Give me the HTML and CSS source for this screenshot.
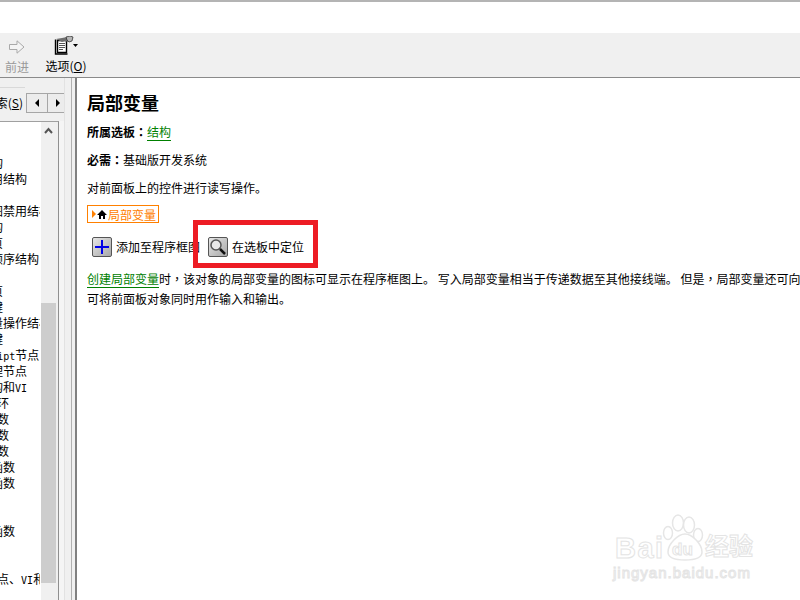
FILE: index.html
```html
<!DOCTYPE html>
<html lang="zh">
<head>
<meta charset="utf-8">
<title>局部变量</title>
<link rel="stylesheet" href="styles.css">
</head>
<body>
<div class="window">
  <div class="titlearea"></div>
  <div class="toolbar">
    <div class="tool tool-forward">
      <svg class="tool-icon" width="18" height="16" viewBox="0 0 18 16"><path d="M1.500 5.500H9V1.800L16 8l-7 6.200v-3.700H1.500z" fill="#f4f4f4" stroke="#a9a9a9"/></svg>
      <span class="tool-label disabled">前进</span>
    </div>
    <div class="tool tool-options">
      <svg class="tool-icon" width="24" height="20" viewBox="0 0 24 20">
        <path d="M3.500 4.500h9v12h-9z" fill="#fff" stroke="#000" stroke-width="1.400"/>
        <path d="M1.500 3.500v14.500h12" fill="none" stroke="#000" stroke-width="1.400"/>
        <path d="M5 7.500h6M5 9.500h6M5 11.500h6M5 13.500h4" stroke="#555"/>
        <path d="M2 3l6-1 5-1 3 2-2 3-3-1-3 1z" fill="#6e6e6e"/>
        <path d="M12 1l4-1 3 1-1 4-3 1-2-2z" fill="#b5b5b5" stroke="#222" stroke-width=".7"/>
        <path d="M19 8h5l-2.500 3z" fill="#000"/>
      </svg>
      <span class="tool-label">选项(<u>O</u>)</span>
    </div>
  </div>
  <div class="main">
    <aside class="side">
      <div class="tabs">
        <div class="tab-line"></div>
        <div class="tab-row">
          <div class="tab-text"><span>搜索(<u>S</u>)</span></div>
          <div class="tab-buttons">
            <button class="nav-btn"><span class="tri-left"></span></button>
            <button class="nav-btn"><span class="tri-right"></span></button>
          </div>
        </div>
      </div>
      <div class="listbox">
        <ul class="list">
          <li>事件结构</li>
          <li>条件禁用结构</li>
          <li></li>
          <li>程序框图禁用结构</li>
          <li>条件结构</li>
          <li>添加分页</li>
          <li>层叠式顺序结构</li>
          <li></li>
          <li>删除分页</li>
          <li>快捷按键</li>
          <li>全局变量操作结构</li>
          <li>删除按键</li>
          <li><span class="lat">MathScript</span>节点</li>
          <li>文本处理节点</li>
          <li>程序结构和<span class="lat">VI</span></li>
          <li><span class="lat">While</span>循环</li>
          <li><span class="lat">DAQ</span>类函数</li>
          <li><span class="lat">XML</span>类函数</li>
          <li><span class="lat">Web</span>类函数</li>
          <li>布尔类函数</li>
          <li>数值类函数</li>
          <li></li>
          <li></li>
          <li>数组类函数</li>
          <li></li>
          <li></li>
          <li><span class="lat">VIs</span>及节点、<span class="lat">VI</span>和函数</li>
        </ul>
        <div class="scrollbar">
          <svg class="scroll-up" width="15" height="17" viewBox="0 0 15 17"><path d="M4 11l3.500-4 3.500 4" fill="none" stroke="#555" stroke-width="2"/></svg>
          <div class="scroll-thumb"></div>
        </div>
      </div>
    </aside>
    <div class="splitter"></div>
    <main class="content">
      <h1>局部变量</h1>
      <p class="line"><b>所属选板<span class="tc" lang="zh-Hant">：</span></b><a>结构</a></p>
      <p class="line"><b>必需<span class="tc" lang="zh-Hant">：</span></b>基础版开发系统</p>
      <p class="line">对前面板上的控件进行读写操作。</p>
      <div class="tag">
        <span class="tag-tri"></span>
        <svg width="10" height="9" viewBox="0 0 10 9"><path d="M5 0L0 5h2v4h2V6h2v3h2V5h2z" fill="#000"/></svg>
        <span>局部变量</span>
      </div>
      <div class="actions">
        <div class="action">
          <span class="icon-btn">
            <svg width="20" height="20" viewBox="0 0 20 20"><path d="M9 3h2v6h6v2h-6v6H9v-6H3V9h6z" fill="#0000e6"/></svg>
          </span>
          <span>添加至程序框图</span>
        </div>
        <div class="action">
          <span class="icon-btn">
            <svg width="20" height="20" viewBox="0 0 20 20">
              <circle cx="8" cy="8" r="5" fill="#e8e8e8" stroke="#555" stroke-width="1.500"/>
              <path d="M12 12l5 5" stroke="#111" stroke-width="2.500"/>
            </svg>
          </span>
          <span>在选板中定位</span>
        </div>
      </div>
      <p class="para"><a>创建局部变量</a>时<span class="tc" lang="zh-Hant">，</span>该对象的局部变量的图标可显示在程序框图上。 写入局部变量相当于传递数据至其他接线端。 但是<span class="tc" lang="zh-Hant">，</span>局部变量还可向<br>可将前面板对象同时用作输入和输出。</p>
    </main>
  </div>
  <div class="highlight"></div>
  <svg class="watermark" width="160" height="75" viewBox="0 0 160 75">
    <g class="wm-shape">
      <ellipse cx="78" cy="13" rx="5.500" ry="8"/>
      <ellipse cx="89" cy="15" rx="5.500" ry="8"/>
      <ellipse cx="68" cy="23" rx="4.500" ry="6.500"/>
      <ellipse cx="98" cy="25" rx="4.500" ry="6.500"/>
      <path d="M85 24c7 0 17 10 17 18 0 6-8 8-17 8s-17-2-17-8c0-8 10-18 17-18z"/>
    </g>
    <text class="wm-big" x="15" y="48">Bai</text>
    <text class="wm-du" x="72" y="45">du</text>
    <text class="wm-cn" x="105" y="45">经验</text>
    <text class="wm-url" x="13" y="68">jingyan.baidu.com</text>
  </svg>
</div>
</body>
</html>
```
FILE: styles.css
```css
* { box-sizing: border-box; }
html, body { margin: 0; padding: 0; }
body { background: #fff; font-family: "Noto Sans CJK SC", "Liberation Sans", sans-serif; font-size: 12px; color: #000; }
.window { position: relative; width: 800px; height: 600px; overflow: hidden; display: flex; flex-direction: column; }
.titlearea { height: 33px; border-top: 2px solid #b4b4b4; background: #fff; flex: none; }
.toolbar { height: 45px; flex: none; background: #f0f0f0; border-bottom: 1px solid #8a8a8a; display: flex; }
.tool { display: flex; flex-direction: column; align-items: center; }
.tool-forward { width: 34px; padding-top: 6px; }
.tool-options { width: 42px; margin-left: 11px; padding-top: 3px; }
.tool-icon { flex: none; }
.tool-label { line-height: 16px; white-space: nowrap; }
.tool-forward .tool-label { margin-top: 4px; }
.tool-options .tool-label { margin-top: 2px; }
.disabled { color: #9a9a9a; }

.main { flex: 1; display: flex; min-height: 0; }
.side { width: 64px; flex: none; background: #f5f5f5; display: flex; flex-direction: column; }
.tabs { height: 43px; flex: none; background: #f0f0f0; padding-top: 9px; }
.tab-line { width: 25px; height: 1px; background: #d9d9d9; }
.tab-row { display: flex; align-items: center; margin-top: 5px; height: 20px; }
.tab-text { width: 26px; flex: none; white-space: nowrap; overflow: hidden; display: flex; justify-content: flex-end; padding-right: 3px; line-height: 20px; }
.tab-text span { flex: none; }
.tab-buttons { display: flex; border: 1px solid #a6a6a6; height: 20px; }
.nav-btn { width: 20px; height: 18px; padding: 0; border: 0; background: #ececec; display: flex; align-items: center; justify-content: center; }
.nav-btn + .nav-btn { border-left: 1px solid #a6a6a6; }
.tri-left, .tri-right { width: 0; height: 0; border-top: 4px solid transparent; border-bottom: 4px solid transparent; }
.tri-left { border-right: 4px solid #000; }
.tri-right { border-left: 4px solid #000; }

.listbox { flex: 1; min-height: 0; margin-right: 5px; border-top: 1px solid #a0a0a0; border-right: 1px solid #8f8f8f; display: flex; background: #fff; }
.list { width: 40px; margin: 0 1px 0 0; flex: none; padding: 33px 0 0; list-style: none; overflow: hidden; }
.list li { height: 16px; line-height: 16px; white-space: nowrap; margin-left: -45px; }
.lat { font-family: "DejaVu Sans Mono", monospace; font-size: 10px; }
.scrollbar { width: 17px; flex: none; background: #f0f0f0; padding-right: 2px; display: flex; flex-direction: column; }
.scroll-up { flex: none; }
.scroll-thumb { margin-top: 164px; height: 280px; background: #cdcdcd; }

.splitter { width: 13px; flex: none; background: #f0f0f0; border-left: 1px solid #e2e2e2; border-right: 2px solid #808080; }
.splitter::after { content: ""; display: block; width: 1px; height: 100%; margin-left: 6px; background: #b0b0b0; }

.content { flex: 1; min-width: 0; background: #fff; padding: 11px 0 0 10px; overflow: hidden; }
h1 { margin: 0 0 9px; font-size: 18px; font-weight: 700; line-height: 26px; }
.line { margin: 0 0 12px; line-height: 16px; white-space: nowrap; }
.tc { font-family: "Noto Sans CJK TC", sans-serif; }
.content a { color: #008000; border-bottom: 1px solid #008000; }
.tag { display: flex; align-items: center; width: 72px; height: 18px; border: 1px solid #ff8000; color: #ff8000; margin-top: -3px; padding-left: 4px; }
.tag-tri { width: 0; height: 0; border-top: 4px solid transparent; border-bottom: 4px solid transparent; border-left: 4px solid #ff8000; margin-right: 1px; }
.tag svg { margin-right: 1px; }
.actions { display: flex; gap: 8px; margin-top: 14px; padding-left: 5px; }
.action { display: flex; align-items: center; gap: 4px; line-height: 20px; white-space: nowrap; }
.icon-btn { width: 20px; height: 20px; display: block; border: 1px solid #555; border-radius: 2px; background: linear-gradient(135deg, #e6e6e6, #a8a8a8); }
.icon-btn svg { display: block; margin: -1px; }
.para { margin: 12px 0 0; line-height: 20px; white-space: nowrap; }

.highlight { position: absolute; left: 193px; top: 220px; width: 125px; height: 48px; border: 5px solid #ed1c24; }
.watermark { position: absolute; left: 600px; top: 510px; overflow: visible; }
.wm-shape { fill: #fff; stroke: #e6e6e6; stroke-width: 1.500; }
.wm-big, .wm-du, .wm-cn, .wm-url { fill: #fff; stroke: #e4e4e4; stroke-width: 1; font-family: "Liberation Sans", sans-serif; font-weight: 700; }
.wm-big { font-size: 29px; letter-spacing: 1.500px; }
.wm-du { font-size: 17px; }
.wm-cn { font-size: 24px; font-family: "Noto Sans CJK SC", sans-serif; }
.wm-url { font-size: 15px; font-weight: 400; letter-spacing: 1px; }
```
